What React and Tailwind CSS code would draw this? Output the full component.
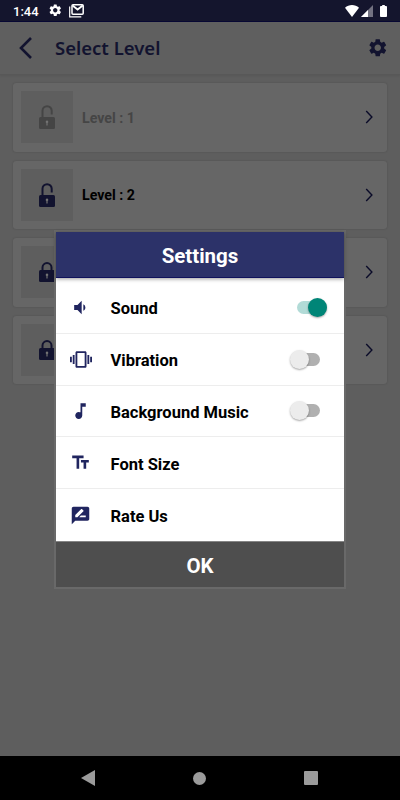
import React from 'react';
import {
  MdSettings,
  MdVolumeDown,
  MdVibration,
  MdMusicNote,
  MdTextFields,
  MdRateReview,
} from 'react-icons/md';

const LEVELS = [
  { id: 1, label: 'Level : 1', open: true, done: true },
  { id: 2, label: 'Level : 2', open: true },
  { id: 3 },
  { id: 4 },
];

const SETTINGS = [
  { label: 'Sound', icon: <MdVolumeDown size={23} className="mr-[2px]" />, toggle: true, on: true },
  { label: 'Vibration', icon: <MdVibration size={23} />, toggle: true },
  { label: 'Background Music', icon: <MdMusicNote size={22} className="mr-[1px]" />, toggle: true },
  { label: 'Font Size', icon: <MdTextFields size={23} className="mr-[1px]" /> },
  { label: 'Rate Us', icon: <MdRateReview size={23} className="mr-[1px]" /> },
];

export default function App() {
  return (
    <div className="relative flex h-[800px] w-[400px] flex-col overflow-hidden bg-[#5e5e5e] font-['Roboto',sans-serif]">
      <StatusBar />

      <header className="flex h-[53px] shrink-0 items-center border-b border-[#585858] bg-[#5f5f5f] pl-[19px] pr-[12px] text-[#12132f] shadow-[0_1px_2px_rgba(0,0,0,0.08)]">
        <svg width="13" height="22" viewBox="0 0 13 22" fill="none" stroke="currentColor" strokeWidth="2.6">
          <path d="M12 1 2 11l10 10" />
        </svg>
        <h1 className="ml-[23px] flex-1 font-['Noto_Sans',sans-serif] text-[18.5px] font-semibold leading-6">
          Select Level
        </h1>
        <MdSettings size={21.5} />
      </header>

      <main className="flex flex-1 flex-col gap-[9px] px-[13px] pt-[8px]">
        {LEVELS.map((level) => (
          <LevelCard key={level.id} level={level} />
        ))}
      </main>

      <NavBar />

      <div className="absolute inset-x-0 top-[232px] flex justify-center">
        <SettingsDialog />
      </div>
    </div>
  );
}

function StatusBar() {
  return (
    <div className="flex h-[22px] shrink-0 items-center border-b border-[#080834] bg-[#14152d] pl-[13px] pr-[13px] text-white">
      <span className="w-[35px] pt-px text-[13px] font-medium leading-none">1:44</span>
      <MdSettings size={14.5} />
      <svg className="ml-[6px]" width="15" height="14" viewBox="0 0 15 14" fill="none" stroke="currentColor">
        <path d="M.7 2.500v10.300h11.600" strokeWidth="1.2" />
        <rect x="3" y=".8" width="11.200" height="9.500" rx="1" strokeWidth="1.5" />
        <path d="m3.500 1.500 5.100 4 5.100-4" strokeWidth="1.8" />
      </svg>
      <div className="ml-auto flex items-center">
        <svg width="14" height="12" viewBox="0 0 15 12" preserveAspectRatio="none" fill="currentColor">
          <path d="M7.500 12 0 2.700C4.100-.8 10.900-.8 15 2.700Z" />
        </svg>
        <svg className="ml-[2px]" width="12" height="12" viewBox="0 0 12 12" fill="currentColor">
          <path d="M0 12 12 0v12Z" opacity=".4" />
          <path d="M0 12 7 5v7Z" />
        </svg>
        <svg className="ml-[7px]" width="7" height="12" viewBox="0 0 8 13" preserveAspectRatio="none" fill="currentColor">
          <path d="M2.500 0h3v1.200H7a1 1 0 0 1 1 1V12a1 1 0 0 1-1 1H1a1 1 0 0 1-1-1V2.200a1 1 0 0 1 1-1h1.500Z" />
        </svg>
      </div>
    </div>
  );
}

function LevelCard({ level }) {
  return (
    <div className="flex h-[68.600px] shrink-0 items-center rounded-[3px] bg-[#666666] pl-2 pr-[13px] shadow-[0_0_2px_rgba(0,0,0,0.18)]">
      <div
        className={`flex h-[52px] w-[52px] items-center justify-center bg-[#5e5e5e] ${
          level.done ? 'text-[#454545]' : 'text-[#12132f]'
        }`}
      >
        <LockIcon open={level.open} />
      </div>
      {level.label && (
        <span
          className={`ml-[9px] pt-px text-[14.200px] font-bold leading-5 ${
            level.done ? 'text-[#454545]' : 'text-black'
          }`}
        >
          {level.label}
        </span>
      )}
      <svg className="ml-auto" width="9" height="14" viewBox="0 0 9 14" fill="none" stroke="#0b0c29" strokeWidth="1.4">
        <path d="m1.200 1 5.700 6-5.700 6" />
      </svg>
    </div>
  );
}

function LockIcon({ open }) {
  if (open) {
    return (
      <svg width="16" height="24" viewBox="0 0 16 24">
        <path
          d="M3.500 12.500V5.800a4.600 4.600 0 0 1 9.200 0V9.500"
          fill="none"
          stroke="currentColor"
          strokeWidth="2"
        />
        <rect y="12" width="16" height="12" rx="1.500" fill="currentColor" />
        <path d="M8 15.500a1.400 1.400 0 0 1 .6 2.600V20.500H7.400v-2.400A1.400 1.400 0 0 1 8 15.500Z" fill="#737373" />
      </svg>
    );
  }
  return (
    <svg width="16" height="20" viewBox="0 0 16 20">
      <path d="M3.500 9V5.600a4.500 4.500 0 0 1 9 0V9" fill="none" stroke="currentColor" strokeWidth="2" />
      <rect y="8" width="16" height="12" rx="1.500" fill="currentColor" />
      <path d="M8 11.500a1.400 1.400 0 0 1 .6 2.600V16.500H7.400v-2.400A1.400 1.400 0 0 1 8 11.500Z" fill="#737373" />
    </svg>
  );
}

function SettingsDialog() {
  return (
    <section className="w-[288px] bg-white outline-2 outline-[#696969]">
      <div className="relative flex h-[45.500px] items-center justify-center border-b border-[#10125c] bg-[#2c3269] pt-[3px] text-[20.500px] font-bold leading-none text-white shadow-[0_1px_4px_rgba(0,0,0,0.4)]">
        Settings
      </div>
      <ul className="pt-[4.500px]">
        {SETTINGS.map((item) => (
          <li
            key={item.label}
            className="flex h-[51.800px] items-center border-b border-[#ededed] pl-[14px] pr-[16px] last:border-b-0"
          >
            <span className="flex w-[22px] justify-center text-[#20255f]">{item.icon}</span>
            <span className="ml-[18.500px] flex-1 pt-[3.500px] text-[16.500px] font-bold leading-5 text-black">
              {item.label}
            </span>
            {item.toggle && <Toggle on={item.on} />}
          </li>
        ))}
      </ul>
      <button
        type="button"
        className="flex h-[46.500px] w-full items-center justify-center border-t border-[#858585] bg-[#4e4e4e] pt-[4px] text-[20.500px] font-bold leading-none text-white"
      >
        OK
      </button>
    </section>
  );
}

function Toggle({ on }) {
  if (on) {
    return (
      <span className="relative mr-[1px] flex h-[13px] w-[30px] items-center rounded-full bg-[#b2dbd7]">
        <span className="absolute right-0 h-[19px] w-[19px] rounded-full bg-[#008577] shadow-[0_1px_2px_rgba(0,0,0,0.35)]" />
      </span>
    );
  }
  return (
    <span className="relative mr-[8px] flex h-[13px] w-[28px] items-center rounded-full bg-[#b0b0b0]">
      <span className="absolute left-[-2px] h-[19px] w-[19px] rounded-full bg-[#ececec] shadow-[0_1px_2px_rgba(0,0,0,0.35)]" />
    </span>
  );
}

function NavBar() {
  return (
    <nav className="flex h-[44px] shrink-0 items-center justify-between bg-black pl-[81px] pr-[82px] text-[#9b9b9b]">
      <svg width="14" height="16" viewBox="0 0 14 16" fill="currentColor">
        <path d="M14 0v16L0 8Z" />
      </svg>
      <span className="h-[13px] w-[13px] rounded-full bg-current" />
      <span className="h-[14px] w-[14px] rounded-[1px] bg-current" />
    </nav>
  );
}
